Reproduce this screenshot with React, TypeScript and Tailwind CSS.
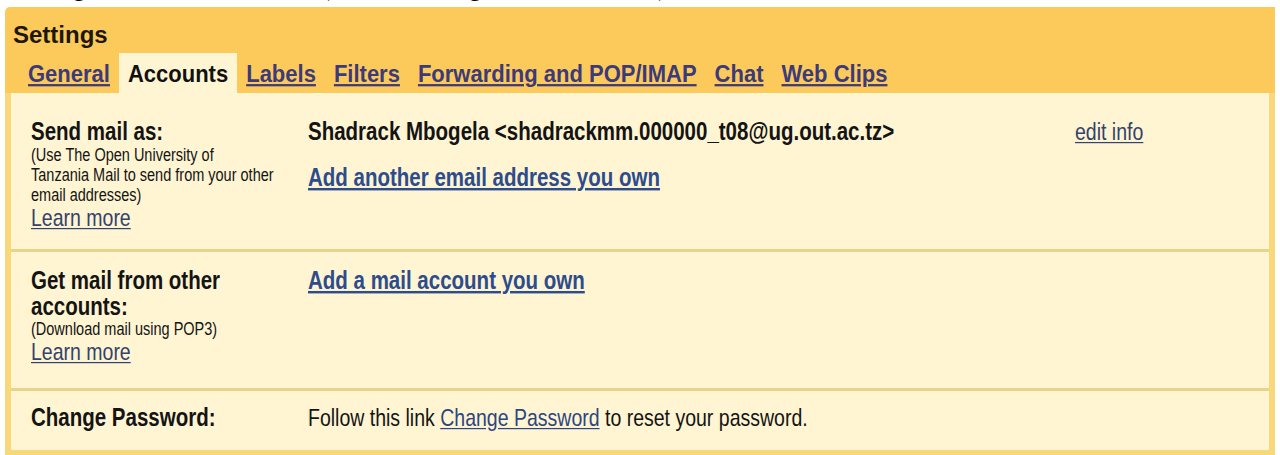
const tabs = ['General', 'Accounts', 'Labels', 'Filters', 'Forwarding and POP/IMAP', 'Chat', 'Web Clips'];

// the page text is drawn tall and narrow, so each line is stretched vertically
const tall = 'origin-center scale-y-[1.22]';

function Row({ className, label, children, side }: { className: string; label: React.ReactNode; children?: React.ReactNode; side?: React.ReactNode }) {
  return (
    <div className={`grid grid-cols-[297px_767px_1fr] ${className}`}>
      <div className="pl-[20px]">{label}</div>
      <div>{children}</div>
      <div>{side}</div>
    </div>
  );
}

function Heading({ children, lh = 'leading-[28px]' }: { children: React.ReactNode; lh?: string }) {
  return <div className={`${tall} text-[20.5px] font-bold ${lh}`}>{children}</div>;
}

function Note({ children }: { children: React.ReactNode }) {
  return <div className={`${tall} text-[14.5px] leading-[20px]`}>{children}</div>;
}

function LearnMore() {
  return (
    <a href="#" className={`${tall} block w-max text-[19.5px] leading-[24px] text-[#33426e] underline underline-offset-[2px]`}>
      Learn more
    </a>
  );
}

export default function App() {
  return (
    <div className="h-[455px] w-[1280px] overflow-hidden bg-white font-['Liberation_Sans',Arial,sans-serif]">
      {/* caption line above, mostly scrolled out of view */}
      <div className="h-[7px] overflow-hidden">
        <p className="-mt-[24px] whitespace-nowrap pl-[17px] font-['Liberation_Serif',serif] text-[24px] leading-[24px] text-black">
          Settings Accounts tab in Gmail (Account settings in the mail client)
        </p>
      </div>

      <div className="mx-[5px] overflow-hidden rounded-tl-[5px]">
        <div className="bg-[#fcca5b]">
          <h1 className="pl-[8px] pt-[16px] text-[24px] font-bold leading-[24px] text-[#1e1606]">Settings</h1>
          <nav className="mt-[6px] flex h-[40px] pl-[14px]">
            {tabs.map((t) =>
              t === 'Accounts' ? (
                <span key={t} className="bg-[#fff5d3] px-[9px] pt-[7px]">
                  <span className="block origin-center scale-y-[1.12] text-[22px] font-bold leading-[28px] text-[#111]">{t}</span>
                </span>
              ) : (
                <span key={t} className="px-[9px] pt-[7px]">
                  <a
                    href="#"
                    className="block origin-center scale-y-[1.12] text-[22px] font-bold leading-[28px] text-[#3c3a78] underline decoration-[2px] underline-offset-[2px]"
                  >
                    {t}
                  </a>
                </span>
              ),
            )}
          </nav>
        </div>

        <div className="border-x-[6px] border-b-[5px] border-[#f7d97c] bg-[#fff5d3] text-[#141414]">
          <Row
            className="border-b-[3px] border-[#e8d38a] pb-[20px] pt-[24px]"
            label={
              <>
                <Heading>Send mail as:</Heading>
                <Note>(Use The Open University of</Note>
                <Note>Tanzania Mail to send from your other</Note>
                <Note>email addresses)</Note>
                <LearnMore />
              </>
            }
            side={
              <a href="#" className={`${tall} block w-max text-[19.5px] leading-[28px] text-[#33426e] underline underline-offset-[2px]`}>
                edit info
              </a>
            }
          >
            <Heading>Shadrack Mbogela &lt;shadrackmm.000000_t08@ug.out.ac.tz&gt;</Heading>
            <a
              href="#"
              className={`${tall} mt-[18px] block w-max text-[20.5px] font-bold leading-[28px] text-[#2d4c8c] underline underline-offset-[2px]`}
            >
              Add another email address you own
            </a>
          </Row>

          <Row
            className="border-b-[3px] border-[#e8d38a] pb-[25px] pt-[15px]"
            label={
              <>
                <Heading lh="leading-[26px]">Get mail from other</Heading>
                <Heading lh="leading-[26px]">accounts:</Heading>
                <Note>(Download mail using POP3)</Note>
                <LearnMore />
              </>
            }
          >
            <a href="#" className={`${tall} block w-max text-[20.5px] font-bold leading-[26px] text-[#2d4c8c] underline underline-offset-[2px]`}>
              Add a mail account you own
            </a>
          </Row>

          <Row className="pb-[19px] pt-[12px]" label={<Heading>Change Password:</Heading>}>
            <p className={`${tall} text-[19.5px] leading-[28px]`}>
              Follow this link{' '}
              <a href="#" className="text-[#2e4580] underline underline-offset-[2px]">
                Change Password
              </a>{' '}
              to reset your password.
            </p>
          </Row>
        </div>
      </div>
    </div>
  );
}
